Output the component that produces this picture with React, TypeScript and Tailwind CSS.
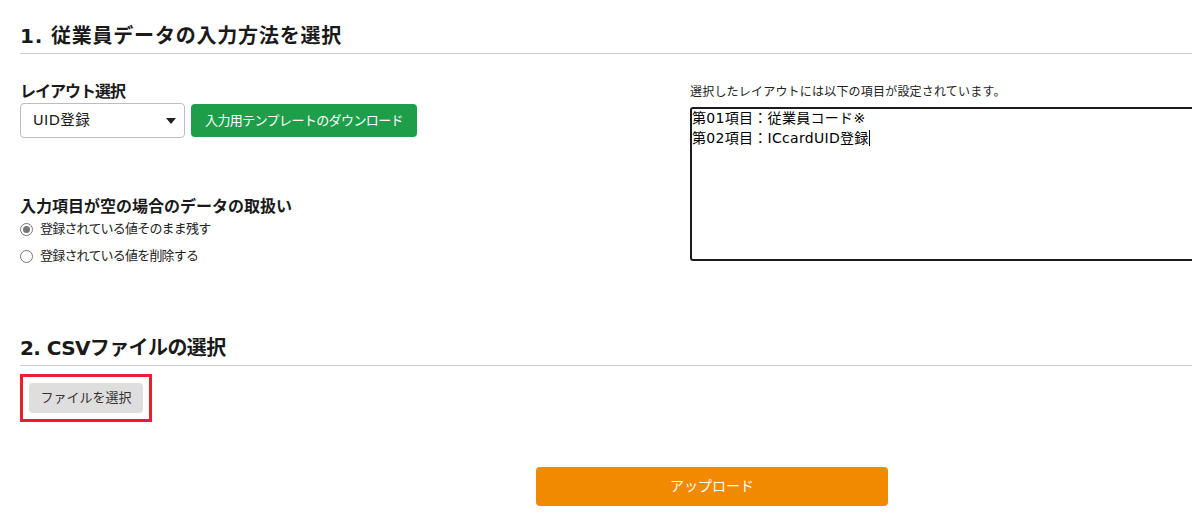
import React from "react";

const FONT = "font-['DejaVu_Sans','Noto_Sans_CJK_JP',sans-serif]";

function Radio({ checked, label }: { checked?: boolean; label: string }) {
  return (
    <label className="flex items-center h-[22px] text-[13px] tracking-[-0.8px] text-[#222]">
      <span className="w-[13px] h-[13px] rounded-full border border-[#777] flex items-center justify-center mr-[7px]">
        {checked && <span className="w-[7px] h-[7px] rounded-full bg-[#777]" />}
      </span>
      {label}
    </label>
  );
}

export default function App() {
  return (
    <div className={`w-[1192px] h-[524px] overflow-hidden bg-white text-[#1a1a1a] ${FONT}`}>
      <div className="w-[1384px] ml-5">
        {/* section 1 */}
        <h2 className="pt-[21px] pb-[2px] border-b border-[#cfcfcf] text-[20px] leading-[30px] font-bold tracking-[0.8px]">
          1. 従業員データの入力方法を選択
        </h2>

        <div className="mt-[27px] grid grid-cols-[670px_1fr]">
          <div>
            <div className="text-[16px] leading-[22px] font-bold tracking-[-1px]">レイアウト選択</div>
            <div className="flex items-center gap-[6px]">
              <div className="w-[165px] h-[35px] border border-[#bdbdbd] rounded-[4px] flex items-center justify-between pl-[12px] pr-[8px] text-[14.5px]">
                <span className="tracking-[0.4px]">UID登録</span>
                <svg width="10" height="6" viewBox="0 0 10 6">
                  <path d="M0 0 L10 0 L5 6 Z" fill="#222" />
                </svg>
              </div>
              <button className="w-[226px] h-[33px] rounded-[4px] bg-[#1f9e4a] text-white text-[13px] tracking-[-0.6px]">
                入力用テンプレートのダウンロード
              </button>
            </div>

            <div className="mt-[58px] text-[16px] leading-[22px] font-bold">
              入力項目が空の場合のデータの取扱い
            </div>
            <Radio checked label="登録されている値そのまま残す" />
            <div className="mt-[5px]">
              <Radio label="登録されている値を削除する" />
            </div>
          </div>

          <div>
            <div className="pt-[2px] text-[12px] leading-[18px] tracking-[0.2px] text-[#222]">
              選択したレイアウトには以下の項目が設定されています。
            </div>
            <div className="mt-[6px] h-[154px] border-2 border-[#1c1c1c] rounded-[3px] text-[14px] leading-[20px] tracking-[0.3px] text-black overflow-hidden">
              <div className="-mt-[1px]">
                <div>第01項目：従業員コード※</div>
                <div className="flex items-center">
                  第02項目：ICcardUID登録
                  <span className="inline-block w-px h-[16px] bg-black" />
                </div>
              </div>
            </div>
          </div>
        </div>

        {/* section 2 */}
        <h2 className="mt-[66px] pb-[2px] border-b border-[#cfcfcf] text-[20px] leading-[30px] font-bold tracking-[-0.6px]">
          2. CSVファイルの選択
        </h2>
        <div className="mt-[8px] inline-block border-[3px] border-[#e8202a] p-[6px]">
          <button className="w-[114px] h-[30px] rounded-[4px] bg-[#dedede] text-[13px] text-[#333]">
            ファイルを選択
          </button>
        </div>

        <button className="mt-[45px] mx-auto block w-[352px] h-[39px] rounded-[4px] bg-[#f28a00] text-white text-[14px]">
          アップロード
        </button>
      </div>
    </div>
  );
}
